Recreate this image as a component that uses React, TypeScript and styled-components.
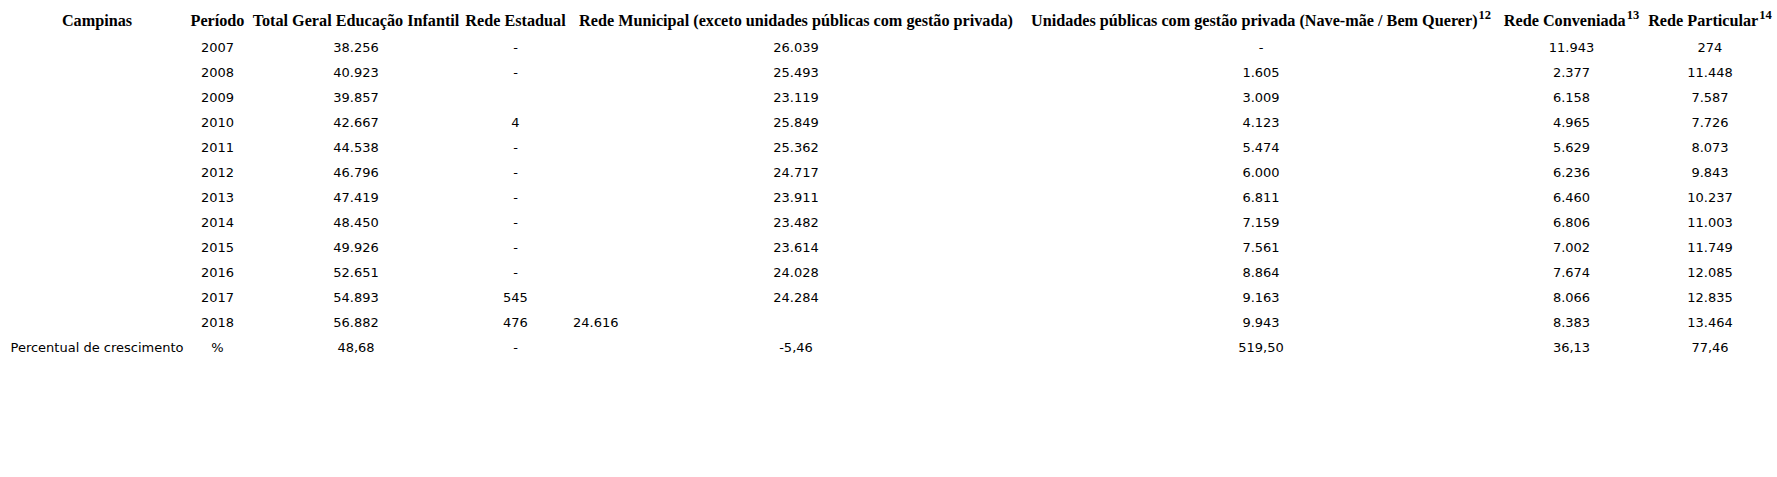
import React from "react";
import styled, { createGlobalStyle } from "styled-components";

const GlobalStyle = createGlobalStyle`
  html, body { margin: 0; padding: 0; background: #ffffff; }
  body { padding: 8px; color: #000; }
`;

const Table = styled.table`
  table-layout: fixed;
  border-collapse: collapse;
  border-spacing: 0;
  width: 1767px;
`;

const HeadCell = styled.th`
  font-family: "Liberation Serif", "Times New Roman", serif;
  font-weight: bold;
  font-size: 16.2px;
  white-space: nowrap;
  text-align: center;
  padding: 0;
  height: 27px;
  vertical-align: middle;
  overflow: visible;
`;

const Sup = styled.sup`
  font-size: 12.5px;
  line-height: 0;
  vertical-align: 7px;
  margin-left: 1px;
`;

const Row = styled.tr`
  height: 25px;
`;

const Cell = styled.td<{ $left?: boolean }>`
  font-family: "DejaVu Sans", Verdana, sans-serif;
  font-size: 13px;
  white-space: nowrap;
  text-align: ${(p) => (p.$left ? "left" : "center")};
  padding: 0 0 0 ${(p) => (p.$left ? "5px" : "0")};
  vertical-align: middle;
  height: 25px;
`;

const widths = [178, 63, 214, 105, 456, 474, 147, 130];

type RowData = {
  label: string;
  period: string;
  values: string[];
  leftIndex?: number;
};

const rows: RowData[] = [
  { label: "", period: "2007", values: ["38.256", "-", "26.039", "-", "11.943", "274"] },
  { label: "", period: "2008", values: ["40.923", "-", "25.493", "1.605", "2.377", "11.448"] },
  { label: "", period: "2009", values: ["39.857", "", "23.119", "3.009", "6.158", "7.587"] },
  { label: "", period: "2010", values: ["42.667", "4", "25.849", "4.123", "4.965", "7.726"] },
  { label: "", period: "2011", values: ["44.538", "-", "25.362", "5.474", "5.629", "8.073"] },
  { label: "", period: "2012", values: ["46.796", "-", "24.717", "6.000", "6.236", "9.843"] },
  { label: "", period: "2013", values: ["47.419", "-", "23.911", "6.811", "6.460", "10.237"] },
  { label: "", period: "2014", values: ["48.450", "-", "23.482", "7.159", "6.806", "11.003"] },
  { label: "", period: "2015", values: ["49.926", "-", "23.614", "7.561", "7.002", "11.749"] },
  { label: "", period: "2016", values: ["52.651", "-", "24.028", "8.864", "7.674", "12.085"] },
  { label: "", period: "2017", values: ["54.893", "545", "24.284", "9.163", "8.066", "12.835"] },
  { label: "", period: "2018", values: ["56.882", "476", "24.616", "9.943", "8.383", "13.464"], leftIndex: 2 },
  { label: "Percentual de crescimento", period: "%", values: ["48,68", "-", "-5,46", "519,50", "36,13", "77,46"] },
];

export default function App() {
  return (
    <>
      <GlobalStyle />
      <Table>
        <colgroup>
          {widths.map((w, i) => (
            <col key={i} style={{ width: w }} />
          ))}
        </colgroup>
        <thead>
          <tr>
            <HeadCell>Campinas</HeadCell>
            <HeadCell>Período</HeadCell>
            <HeadCell>Total Geral Educação Infantil</HeadCell>
            <HeadCell>Rede Estadual</HeadCell>
            <HeadCell>Rede Municipal (exceto unidades públicas com gestão privada)</HeadCell>
            <HeadCell>
              Unidades públicas com gestão privada (Nave-mãe / Bem Querer)<Sup>12</Sup>
            </HeadCell>
            <HeadCell>
              Rede Conveniada<Sup>13</Sup>
            </HeadCell>
            <HeadCell>
              Rede Particular<Sup>14</Sup>
            </HeadCell>
          </tr>
        </thead>
        <tbody>
          {rows.map((r, i) => (
            <Row key={i}>
              <Cell>{r.label}</Cell>
              <Cell>{r.period}</Cell>
              {r.values.map((v, j) => (
                <Cell key={j} $left={r.leftIndex === j}>
                  {v}
                </Cell>
              ))}
            </Row>
          ))}
        </tbody>
      </Table>
    </>
  );
}
